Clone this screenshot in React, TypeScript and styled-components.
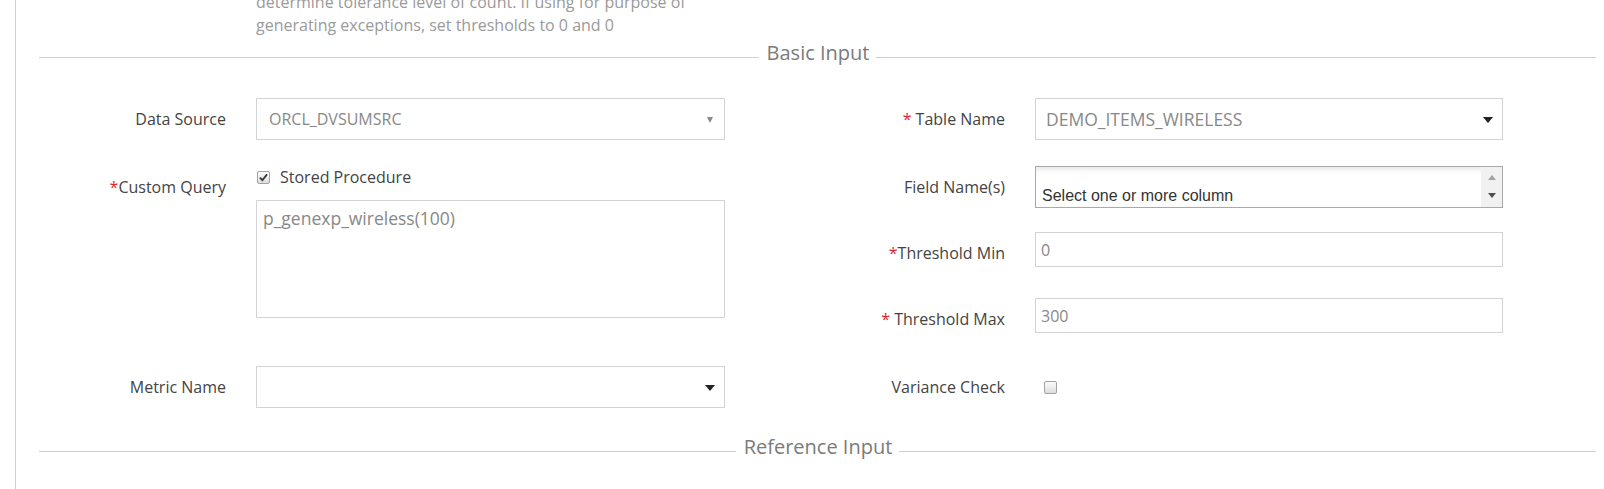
import styled, { createGlobalStyle } from 'styled-components';

const GlobalStyle = createGlobalStyle`
  html, body {
    margin: 0;
    padding: 0;
    background: #fff;
  }
  body {
    font-family: 'Open Sans', 'Liberation Sans', sans-serif;
    overflow: hidden;
  }
`;

const Caret = ({ small }: { small?: boolean }) => <CaretShape $small={small} />;

const Check = () => (
  <svg width="9" height="9" viewBox="0 0 9 9">
    <path d="M1 4.6 L3.4 7.2 L8 1.4" fill="none" stroke="#333" strokeWidth="1.8" />
  </svg>
);

export default function App() {
  return (
    <>
      <GlobalStyle />
      <Page>
        <HelpText>
          determine tolerance level of count. If using for purpose of
          <br />
          generating exceptions, set thresholds to 0 and 0
        </HelpText>

        <Legend $top={2}>
          <LegendLine />
          <LegendText>Basic Input</LegendText>
          <LegendLine />
        </Legend>

        <FormRow $top={32}>
          <Field>
            <Label>Data Source</Label>
            <SelectBox $padRight={11}>
              <span>ORCL_DVSUMSRC</span>
              <Caret small />
            </SelectBox>
          </Field>
          <Field>
            <Label>
              <Req>*</Req> Table Name
            </Label>
            <SelectBox $size={17.5} $padLeft={10}>
              <span>DEMO_ITEMS_WIRELESS</span>
              <Caret />
            </SelectBox>
          </Field>
        </FormRow>

        <FormRow $top={26}>
          <Field>
            <Label>
              <Req>*</Req>Custom Query
            </Label>
            <div>
              <CheckRow>
                <CheckBox>
                  <Check />
                </CheckBox>
                Stored Procedure
              </CheckRow>
              <QueryArea>p_genexp_wireless(100)</QueryArea>
            </div>
          </Field>
          <Stack>
            <Field>
              <Label>Field Name(s)</Label>
              <ListBox>
                <ListText>
                  <Placeholder>Select one or more column</Placeholder>
                </ListText>
                <ScrollBar>
                  <Arrow $dir="up" />
                  <Arrow $dir="down" />
                </ScrollBar>
              </ListBox>
            </Field>
            <Field>
              <Label>
                <Req>*</Req>Threshold Min
              </Label>
              <TextInput>0</TextInput>
            </Field>
            <Field>
              <Label>
                <Req>*</Req> Threshold Max
              </Label>
              <TextInput>300</TextInput>
            </Field>
          </Stack>
        </FormRow>

        <FormRow $top={26}>
          <Field>
            <Label>Metric Name</Label>
            <SelectBox>
              <span />
              <Caret />
            </SelectBox>
          </Field>
          <Field>
            <Label>Variance Check</Label>
            <CheckCell>
              <CheckBox />
            </CheckCell>
          </Field>
        </FormRow>

        <Legend $top={25}>
          <LegendLine />
          <LegendText>Reference Input</LegendText>
          <LegendLine />
        </Legend>
      </Page>
    </>
  );
}

/*
 * Styles
 */

const Page = styled.div`
  margin-left: 15px;
  border-left: 1px solid #c9d2db;
  padding: 0 8px 0 23px;
  height: 489px;
  box-sizing: border-box;
  overflow: hidden;
`;

const HelpText = styled.p`
  margin: -9px 0 0 217px;
  font-size: 16px;
  line-height: 23px;
  color: #9a9a9a;
  white-space: nowrap;
`;

const Legend = styled.div<{ $top: number }>`
  display: flex;
  align-items: center;
  margin-top: ${(p) => p.$top}px;
`;

const LegendLine = styled.span`
  flex: 1;
  height: 1px;
  background: #cfcfcf;
  margin-top: 9px;
`;

const LegendText = styled.span`
  font-size: 20px;
  line-height: 27px;
  color: #7b7b7b;
  padding: 0 7px 0 8px;
`;

const FormRow = styled.div<{ $top: number }>`
  display: grid;
  grid-template-columns: 686px 685px;
  column-gap: 93px;
  align-items: start;
  margin-top: ${(p) => p.$top}px;
`;

const Stack = styled.div`
  display: flex;
  flex-direction: column;
  gap: 24px;
`;

const Field = styled.div`
  display: grid;
  grid-template-columns: 187px 1fr;
  column-gap: 30px;
  align-items: start;
`;

const Label = styled.label`
  text-align: right;
  font-size: 16px;
  line-height: 42px;
  color: #444;
  white-space: nowrap;
`;

const Req = styled.span`
  color: #e3262b;
`;

const SelectBox = styled.div<{ $size?: number; $padLeft?: number; $padRight?: number }>`
  display: flex;
  align-items: center;
  justify-content: space-between;
  height: 42px;
  box-sizing: border-box;
  border: 1px solid #d3d3d3;
  padding: 0 ${(p) => p.$padRight ?? 9}px 0 ${(p) => p.$padLeft ?? 12}px;
  font-size: ${(p) => p.$size ?? 16}px;
  color: #888;
`;

const CaretShape = styled.span<{ $small?: boolean }>`
  width: 0;
  height: 0;
  border-left: ${(p) => (p.$small ? 3.5 : 5)}px solid transparent;
  border-right: ${(p) => (p.$small ? 3.5 : 5)}px solid transparent;
  border-top: 6px solid ${(p) => (p.$small ? '#8a8a8a' : '#222')};
  margin-top: 1px;
`;

const TextInput = styled.div`
  display: flex;
  align-items: center;
  height: 35px;
  box-sizing: border-box;
  border: 1px solid #d3d3d3;
  padding: 0 5px;
  font-size: 16px;
  color: #888;
`;

const CheckRow = styled.div`
  display: flex;
  align-items: center;
  gap: 10px;
  height: 22px;
  padding-left: 1px;
  font-size: 16px;
  color: #444;
`;

const CheckBox = styled.span`
  display: inline-flex;
  align-items: center;
  justify-content: center;
  width: 13px;
  height: 13px;
  box-sizing: border-box;
  border: 1px solid #a3a3a3;
  border-radius: 2px;
  background: linear-gradient(#fcfcfc, #dcdcdc);
`;

const CheckCell = styled.div`
  display: flex;
  align-items: center;
  height: 42px;
  padding-left: 9px;
`;

const QueryArea = styled.div`
  margin-top: 12px;
  height: 118px;
  box-sizing: border-box;
  border: 1px solid #d3d3d3;
  padding: 6px 6px;
  font-size: 17.5px;
  line-height: 22px;
  color: #888;
`;

const ListBox = styled.div`
  display: flex;
  height: 42px;
  box-sizing: border-box;
  border: 1px solid #a9a9a9;
  box-shadow: inset 0 7px 6px -5px #e4e4e4;
`;

const ListText = styled.div`
  flex: 1;
  display: flex;
  align-items: flex-end;
  padding: 0 0 2px 6px;
  font-family: 'Liberation Sans', Arial, sans-serif;
  font-size: 16px;
  line-height: 18px;
  color: #333;
  overflow: hidden;
`;

const Placeholder = styled.span`
  display: block;
  max-width: 194px;
  overflow: hidden;
  white-space: nowrap;
`;

const ScrollBar = styled.div`
  width: 21px;
  background: #f1f1f1;
  display: flex;
  flex-direction: column;
  align-items: center;
  justify-content: space-between;
  padding: 8px 0 9px;
  box-sizing: border-box;
`;

const Arrow = styled.span<{ $dir: 'up' | 'down' }>`
  width: 0;
  height: 0;
  border-left: 4px solid transparent;
  border-right: 4px solid transparent;
  ${(p) =>
    p.$dir === 'up'
      ? 'border-bottom: 5px solid #a3a3a3;'
      : 'border-top: 5px solid #505050;'}
`;
